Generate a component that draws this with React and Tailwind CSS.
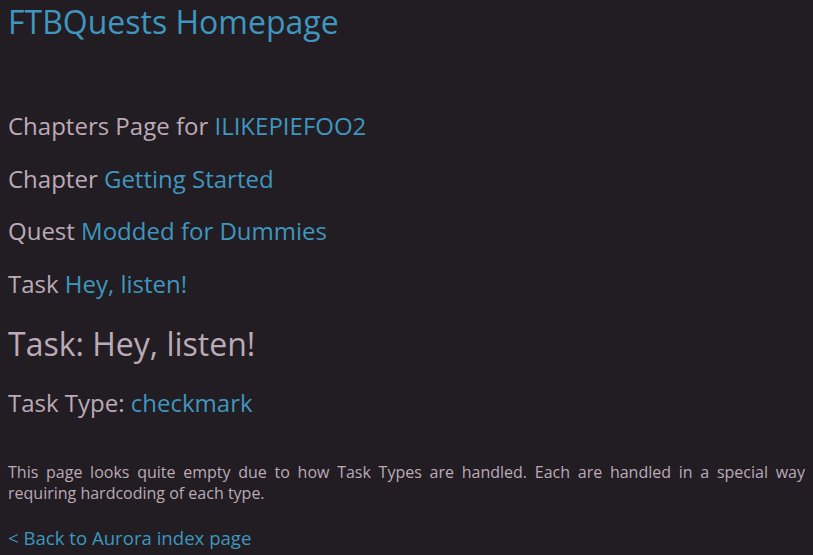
import React from "react";

const Line = ({ label, value }) => (
  <p className="text-[24px] leading-[52.5px] text-[#bcaab7]">
    {label} <a className="text-[#3f96bf]">{value}</a>
  </p>
);

const App = () => {
  return (
    <div className="min-h-[555px] bg-[#211d22] px-2 font-['Open_Sans',sans-serif] text-[#bcaab7]">
      <h1 className="text-[32px] leading-[44px] text-[#3f96bf]">FTBQuests Homepage</h1>
      <div className="pt-[56px]">
        <Line label="Chapters Page for" value="ILIKEPIEFOO2" />
        <Line label="Chapter" value="Getting Started" />
        <Line label="Quest" value="Modded for Dummies" />
        <Line label="Task" value="Hey, listen!" />
        <h2 className="text-[32px] leading-[67px]">Task: Hey, listen!</h2>
        <Line label="Task Type:" value="checkmark" />
      </div>
      <p className="mt-[32px] text-justify text-[16px] leading-[21px]">
        <span className="block [text-align-last:justify]">
          This page looks quite empty due to how Task Types are handled. Each are handled in a special way
        </span>
        requiring hardcoding of each type.
      </p>
      <a className="mt-[20px] block text-[18.6px] leading-[27px] text-[#3f96bf]">&lt; Back to Aurora index page</a>
    </div>
  );
};

export default App;
